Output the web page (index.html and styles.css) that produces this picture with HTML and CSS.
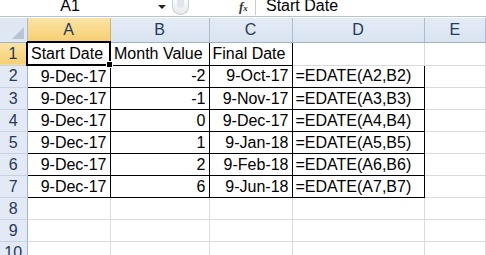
FILE: index.html
```html
<!DOCTYPE html>
<html lang="en">
<head>
    <meta charset="UTF-8">
    <title>EDATE example</title>
    <link rel="stylesheet" href="styles.css">
</head>
<body>
    <div class="formula-bar">
        <div class="name-box">A1</div>
        <div class="name-drop"></div>
        <div class="grip"><span class="grip-dot"></span></div>
        <div class="fx">f<sub>x</sub></div>
        <div class="formula">Start Date</div>
    </div>
    <table class="sheet">
        <colgroup>
            <col class="col-head">
            <col class="col-a">
            <col class="col-b">
            <col class="col-c">
            <col class="col-d">
            <col>
        </colgroup>
        <tr class="head-row">
            <th class="corner"><span class="corner-tri"></span></th>
            <th class="active">A</th>
            <th>B</th>
            <th>C</th>
            <th>D</th>
            <th>E</th>
        </tr>
        <tr>
            <th class="row-num active">1</th>
            <td class="box selected">Start Date<span class="handle"></span></td>
            <td class="box left">Month Value</td>
            <td class="box left">Final Date</td>
            <td></td>
            <td></td>
        </tr>
        <tr>
            <th class="row-num">2</th>
            <td class="box">9-Dec-17</td>
            <td class="box">-2</td>
            <td class="box">9-Oct-17</td>
            <td class="box left">=EDATE(A2,B2)</td>
            <td></td>
        </tr>
        <tr>
            <th class="row-num">3</th>
            <td class="box">9-Dec-17</td>
            <td class="box">-1</td>
            <td class="box">9-Nov-17</td>
            <td class="box left">=EDATE(A3,B3)</td>
            <td></td>
        </tr>
        <tr>
            <th class="row-num">4</th>
            <td class="box">9-Dec-17</td>
            <td class="box">0</td>
            <td class="box">9-Dec-17</td>
            <td class="box left">=EDATE(A4,B4)</td>
            <td></td>
        </tr>
        <tr>
            <th class="row-num">5</th>
            <td class="box">9-Dec-17</td>
            <td class="box">1</td>
            <td class="box">9-Jan-18</td>
            <td class="box left">=EDATE(A5,B5)</td>
            <td></td>
        </tr>
        <tr>
            <th class="row-num">6</th>
            <td class="box">9-Dec-17</td>
            <td class="box">2</td>
            <td class="box">9-Feb-18</td>
            <td class="box left">=EDATE(A6,B6)</td>
            <td></td>
        </tr>
        <tr>
            <th class="row-num">7</th>
            <td class="box">9-Dec-17</td>
            <td class="box">6</td>
            <td class="box">9-Jun-18</td>
            <td class="box left">=EDATE(A7,B7)</td>
            <td></td>
        </tr>
        <tr>
            <th class="row-num">8</th>
            <td></td><td></td><td></td><td></td><td></td>
        </tr>
        <tr>
            <th class="row-num">9</th>
            <td></td><td></td><td></td><td></td><td></td>
        </tr>
        <tr>
            <th class="row-num">10</th>
            <td></td><td></td><td></td><td></td><td></td>
        </tr>
    </table>
</body>
</html>
```

FILE: styles.css
```css
body {
    margin: 0;
    font-family: "Liberation Sans", Arial, sans-serif;
    font-size: 16px;
    color: #000;
    background-color: #fff;
    overflow: hidden;
}

.formula-bar {
    display: flex;
    align-items: flex-start;
    height: 16px;
    border-bottom: 1px solid #b4c3d6;
    margin-bottom: 1px;
    background-color: #fff;
}

.name-box {
    width: 140px;
    text-align: center;
    line-height: 14px;
    margin-top: -1px;
}

.name-drop {
    width: 0;
    height: 0;
    margin: 5px 0 0 18px;
    border-left: 4px solid transparent;
    border-right: 4px solid transparent;
    border-top: 4px solid #222;
}

.grip {
    width: 15px;
    height: 16px;
    margin: -2px 0 0 6px;
    border: 1px solid #c8cfd8;
    border-top: none;
    border-radius: 0 0 9px 9px;
    background: linear-gradient(#fbfcfd, #e6eaef);
    display: flex;
    justify-content: center;
}

.grip-dot {
    width: 7px;
    height: 9px;
    margin-top: 1px;
    border-radius: 0 0 4px 4px;
    background-color: #e1e5ea;
}

.fx {
    width: 16px;
    margin-left: 50px;
    font-family: "Liberation Serif", serif;
    font-style: italic;
    font-weight: bold;
    font-size: 13px;
    line-height: 14px;
    color: #333;
}

.fx sub {
    font-size: 9px;
    vertical-align: 0;
}

.formula {
    flex: 1;
    height: 16px;
    padding-left: 10px;
    border-left: 1px solid #c3ccd8;
    line-height: 14px;
    margin-top: -1px;
}

.sheet {
    border-collapse: collapse;
    table-layout: fixed;
    width: 486px;
}

.col-head { width: 27px; }
.col-a { width: 83px; }
.col-b { width: 99px; }
.col-c { width: 83px; }
.col-d { width: 132px; }

.sheet th,
.sheet td {
    padding: 0 3px;
    height: 21px;
    white-space: nowrap;
    overflow: visible;
    line-height: 20px;
}

.sheet td {
    border: 1px solid #d8dadd;
    border-top: none;
    text-align: right;
}

.head-row th {
    height: 23px;
    font-weight: normal;
    text-align: center;
    color: #26395a;
    background: linear-gradient(#e3ebf6, #d9e3f0);
    border-right: 1px solid #a9bcd2;
    border-bottom: 1px solid #9eb3cc;
}

.head-row th.active {
    background: linear-gradient(#fbe3a6, #f6cf71);
    border-bottom: 1px solid #e6a53c;
    border-right: 1px solid #d9b468;
}

.head-row .corner {
    position: relative;
    background: #dfe7f2;
}

.corner-tri {
    position: absolute;
    right: 3px;
    bottom: 3px;
    width: 0;
    height: 0;
    border-left: 12px solid transparent;
    border-bottom: 12px solid #b6c5d7;
}

.row-num {
    font-weight: normal;
    text-align: center;
    color: #26395a;
    background-color: #e3eaf5;
    border-right: 1px solid #9eb3cc;
    border-bottom: 1px solid #c5d3e4;
}

.row-num.active {
    background: linear-gradient(#fbe3a6, #f6cf71);
    border-right: 1px solid #e6a53c;
}

.sheet td.box {
    border: 1px solid #000;
}

.sheet td.left {
    text-align: left;
}

.sheet td.selected {
    position: relative;
    text-align: left;
    border: 2px solid #000;
}

.handle {
    position: absolute;
    right: -4px;
    bottom: -4px;
    width: 5px;
    height: 5px;
    background-color: #000;
    border: 1px solid #fff;
}
```
